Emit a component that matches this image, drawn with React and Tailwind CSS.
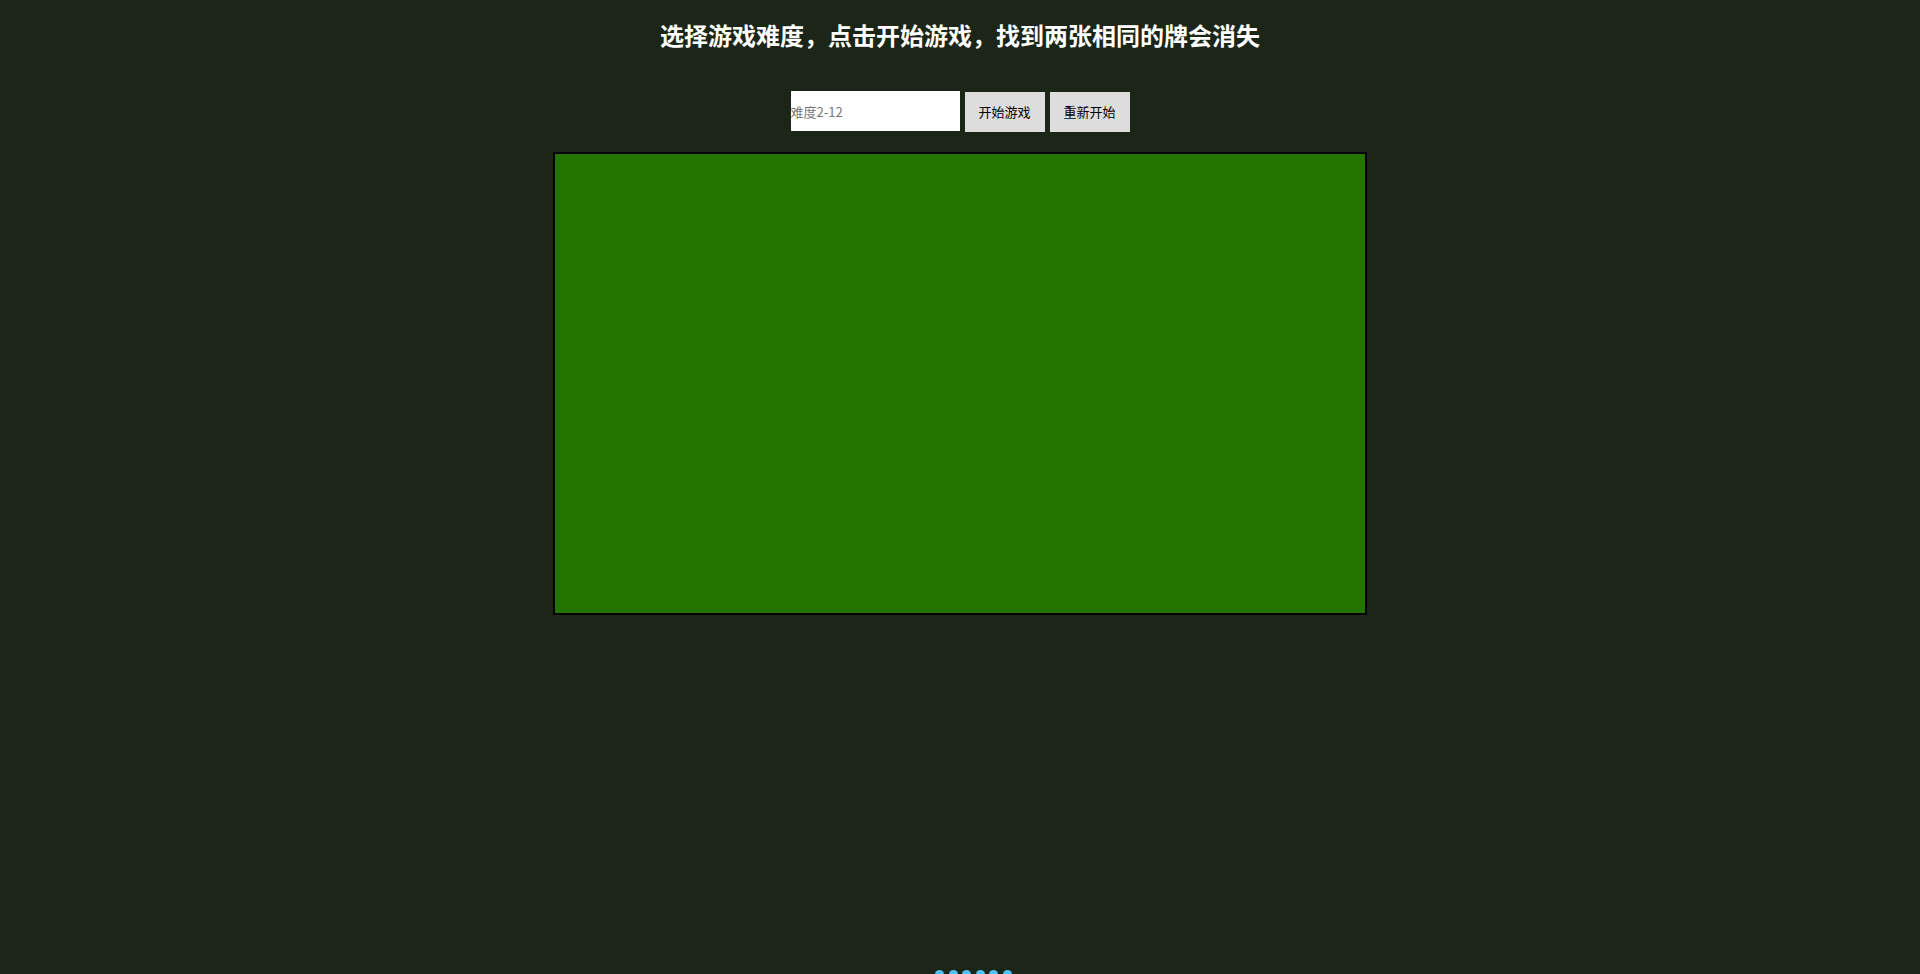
export default function App() {
  const dots = [0, 1, 2, 3, 4, 5]
  return (
    <div
      className="relative h-[974px] w-full overflow-hidden bg-[#1b2619] flex flex-col items-center"
      style={{ fontFamily: '"Noto Sans CJK SC", "Noto Sans", sans-serif' }}
    >
      <h1 className="mt-[20px] h-[30px] text-[24px] leading-[30px] font-bold text-white">
        选择游戏难度，点击开始游戏，找到两张相同的牌会消失
      </h1>

      <div className="mt-[41px] flex items-start gap-[5px]">
        <input
          type="text"
          placeholder="难度2-12"
          className="h-[40px] w-[169px] bg-white p-0 text-[13px] text-black outline-none placeholder:text-[#777]"
        />
        <button className="mt-[1px] h-[40px] w-[80px] bg-[#dddddd] text-[13px] text-black">开始游戏</button>
        <button className="mt-[1px] h-[40px] w-[80px] bg-[#dddddd] text-[13px] text-black">重新开始</button>
      </div>

      <div className="mt-[20px] h-[463px] w-[814px] border-2 border-black bg-[#237500]" />

      <div className="absolute left-[935px] top-[970px] flex gap-[4.5px]">
        {dots.map((d) => (
          <span key={d} className="h-[9px] w-[9px] rounded-full bg-[#4fc3f7]" />
        ))}
      </div>
    </div>
  )
}
